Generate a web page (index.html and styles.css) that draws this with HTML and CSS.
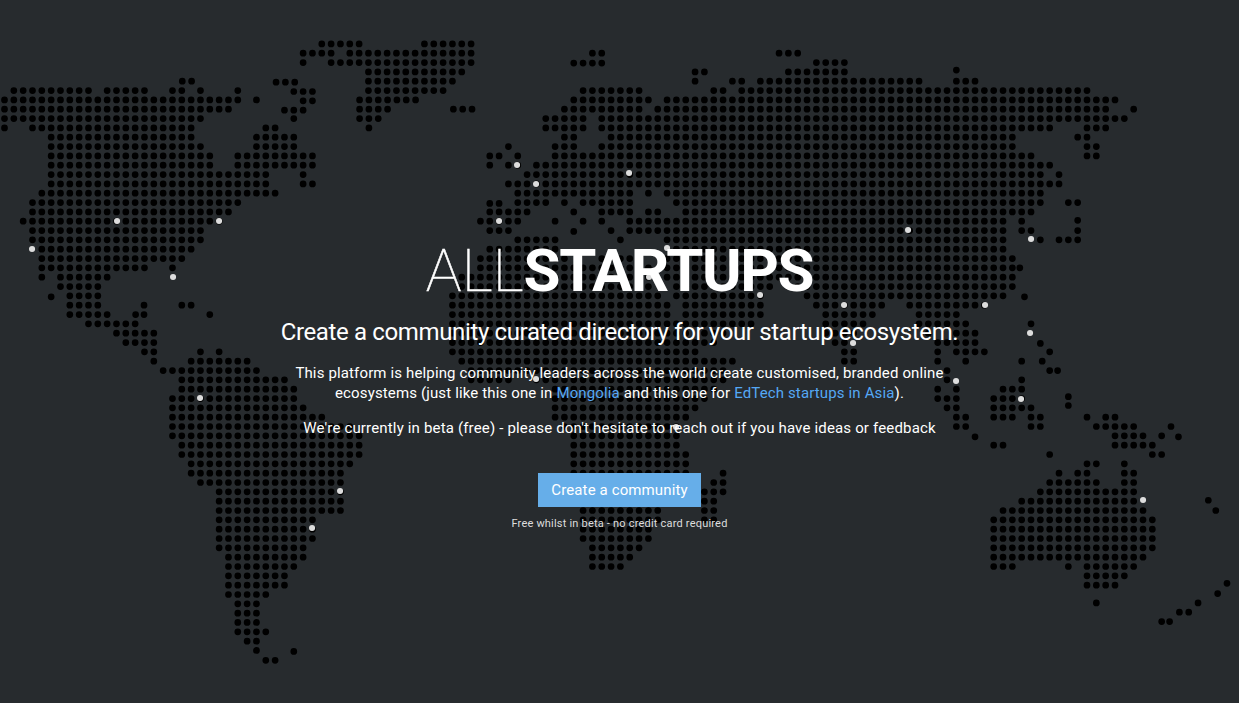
FILE: index.html
```
<!DOCTYPE html>
<html lang="en">
<head>
<meta charset="utf-8">
<title>AllStartups</title>
<link rel="stylesheet" href="styles.css">
</head>
<body>
<main class="hero">
<svg class="map" width="1239" height="703" viewBox="0 0 1239 703" aria-hidden="true">
<!-- One unit is one grid cell; each run is drawn as a row of round dots. -->
<g transform="translate(4.5 43.9) scale(9.332)">
<!-- North and South America -->
<path class="land" d="M19.05 4h1.1M29.1 4.1h2.1M1 5h8.1M11 5h4.1M18 5h1.1M21 5h.1M25 5h.1M31 5.1h2.1M0 6h25.1M27 6h.1M32 6.1h1.1M0 7h24.1M30 7.1h2.1M0 8h21.1M31 8h.1M0 9h.1M3 9h17.1M28 9h1.1M5 10h15.1M27 10h4.1M5 11h16.1M27 11h4.1M5 12h17.1M25 12h8.1M5 13h17.1M25 13h8.1M5 14h23.1M32 14h.1M5 15h23.1M32 15h1.1M4 16h25.1M3 17h22.1M3 18h21.1M2 19h21.1M3 20h18.1M3 21h18.1M4 22h16.1M4 23h15.1M4 24h11.1M18 24h.1M4 25h.1M6 25h5.1M6 26h4.1M5 27.1h.1M7 27h3.1M7 28h3.1M14.95 28h.1M19 28h1.1M7 29h4.1M14.05 29h.1M14.95 29h.1M22 29h.1M9 30h5.1M12 31h4.1M13 32h3.1M15 33h1.1M21 33h.1M23 33h.1M16 34h.1M20 34h6.1M17 35h10.1M19 36h11.1M19 37h12.1M18 38h13.1M18 39h14.1M18 40h16.1M18 41h19.1M18 42h20.1M19 43h19.1M19 44h19.1M20 45h17.1M20 46h16.1M21 47h15.1M23 48h13.1M23 49h13.1M23 50h13.1M23 51h10.1M23 52h10.1M23 53h10.1M23 54h9.1M24 55h8.1M24 56h7.1M24 57h6.1M24 58h6.1M24 59h4.1M25 60h2.1M25 61h2.1M25 62h2.1M25 63h3.1M26 64h1.1M27 65h.1M31 65.1h.1M28 66.05h1.1"/>
<!-- Greenland, Iceland and the Arctic islands -->
<path class="land" d="M34 0h4.1M45 0h5.1M32 1h3.1M37 1h13.1M32 2h.1M35 2h15.1M39 3h10.1M39 4h9.1M39 5h8.1M38.05 6h6.1M38.05 7h3.1M48.1 7h2.1M38.05 8h2.1M39.05 9h.1M63 1h1.1M61 2.05h3.1M74 3h1.1M74 4h.1M83 1h2.1M87 2h3.1M84 3h6.1M102 2.8h.1"/>
<!-- Europe and Asia -->
<path class="land" d="M78 4h1.1M81 4h17.1M102 4h2.1M62 5h6.1M76 5h1.1M79 5h37.1M61 6h8.1M71 6h48.1M60 7h8.1M70 7h48.1M121 7h.1M58 8h4.1M64 8h56.1M58 9h4.1M64 9h48.1M116 9h2.1M60 10h1.1M65 10h43.1M115 10h1.1M54 11h.1M59 11h2.1M64 11h44.1M116 11h1.1M52 12h1.1M55 12h.1M59 12h51.1M116 12h1.1M52 13h.1M54 13h1.1M57 13h55.1M56 14h55.1M113 14h.1M54 15h59.1M55 16h12.1M69 16h.1M71 16h40.1M52 17.1h1.1M55 17h3.1M60 17h.1M62 17h5.1M72 17h39.1M114 17h1.1M52 18h4.1M61 18h.1M64 18h3.1M69 18h1.1M73 18h37.1M51 19h4.1M59 19h.1M62 19h.1M64 19h.1M67 19h40.1M109 19h.1M115 18.9h.1M52 20h2.1M61 20.1h.1M65 20h.1M67 20h40.1M109 20h1.1M115 20h.1M66 21h.1M71 21h36.1M111 21h.1M113 21h2.1M72 22h35.1M71 23h37.1M71 24h37.1M108.8 24h.1M71 25h37.1M72 26h10.1M84 26h24.1M72 27h9.1M86 27h21.1M109.3 27.1h.1M73 28h8.1M87 28h7.1M97 28h8.1M73 29h8.1M88 29h5.1M98 29h4.1M73 30h7.1M88 30h4.1M98 30h5.1M110 30h.1M75 31h2.1M88 31h3.1M99 31h.1M102 31h2.1M89 32h1.1M100 32h4.1M111 32.1h.1M90 33h1.1M100 33h.1M102 33h3.1M112 33h.1M90 34h1.1M100 34h.1M103 34h.1M109 34h.1M111.2 34h.1M101 35h.1M112 35h.1M112.85 35h.1"/>
<!-- Africa -->
<path class="land" d="M55 21h4.1M52 22h7.1M51 23h9.1M64 23h4.1M51 24h18.1M49 25h20.1M49 26h20.1M48 27h22.1M48 28h23.1M48 29h23.1M48 30h24.1M48 31h25.1M48 32h28.1M48 33h26.1M49 34h29.1M50 35h27.1M50 36h4.1M57 36h20.1M59 37h17.1M59 38h16.1M59 39h15.1M59 40h14.1M60 41h12.1M61 42h11.1M61 43h11.1M61 44h12.1M61 45h12.1M61 46h12.1M77 46h.1M61 47h11.1M76 47h1.1M61 48h11.1M75 48h2.1M62 49h9.1M75 49h1.1M62 50h8.1M75 50h1.1M62 51h8.1M75 51h1.1M62 52h7.1M62 53h7.1M63 54h5.1M63 55h4.1M63 56h3.1"/>
<!-- South-East Asia and Oceania -->
<path class="land" d="M101 36h.1M109 36h.1M100 37h.1M102 37h.1M107 37h2.1M100 38h2.1M106 38h3.1M114 37.8h.1M101 39h1.1M106 39h4.1M114 38.75h.1M102 40h1.1M106 40h2.1M110 40h1.1M116 40h.1M118 40h1.1M102 41h1.1M110 41h1.1M117 41h4.1M125 41h.1M104 42.1h.1M119 42h3.1M124 42h.1M125.8 42.1h.1M106 43h1.1M119 43h4.1M112 44h.1M123 44h1.1M116 45h1.1M120 45h.1M113 46h.1M115 46h1.1M120 46h1.1M112 47h5.1M120 47h1.1M111 48h10.1M109 49h12.1M107 50h15.1M106 51h17.1M106 52h17.1M106 53h17.1M106 54h17.1M106 55h16.1M106 56h2.1M114 56h.1M116 56h5.1M116 57h4.1M116 58h3.1M117 59.9h.1M129 48.9h.1M129.8 50h.1M131 57.8h.1M130 58.9h.1M127.9 59.9h.1M125.9 60.9h1.1M124 61.9h.1M124.85 61.9h.1"/>
</g>
<!-- Active communities -->
<path class="cities" d="M117 221h.1M219 221h.1M32 249h.1M173 277h.1M200 398h.1M340 491h.1M312 528h.1M517 165h.1M536 184h.1M499 221h.1M629 173h.1M908 230h.1M1031 239h.1M667 248h.1M649 277h.1M760 295h.1M844 305h.1M985 305h.1M853 343h.1M1030 333h.1M956 381h.1M1021 399h.1M536 379h.1M676 427h.1M1143 500h.1"/>
</svg>
<div class="content">
<h1 class="logo">ALL<b>STARTUPS</b></h1>
<h2 class="tagline">Create a community curated directory for your startup ecosystem.</h2>
<p class="text">This platform is helping community leaders across the world create customised, branded online<br>ecosystems (just like this one in <a class="link" href="#">Mongolia</a> and this one for <a class="link" href="#">EdTech startups in Asia</a>).</p>
<p class="text text-beta">We're currently in beta (free) - please don't hesitate to reach out if you have ideas or feedback</p>
<a class="button" href="#">Create a community</a>
<p class="note">Free whilst in beta - no credit card required</p>
</div>
</main>
</body>
</html>
```
FILE: styles.css
```
body {
  margin: 0;
  background: #272b2e;
  color: #fff;
  font-family: Roboto, sans-serif;
}

.hero {
  position: relative;
  height: 703px;
  overflow: hidden;
}

.map {
  position: absolute;
  top: 0;
  left: 0;
}

.land {
  fill: none;
  stroke: #000;
  stroke-width: 0.72;
  stroke-linecap: round;
  stroke-dasharray: 0 1;
}

.cities {
  fill: none;
  stroke: #ddd;
  stroke-width: 6;
  stroke-linecap: round;
}

.content {
  position: relative;
  display: flex;
  flex-direction: column;
  align-items: center;
  padding-top: 238px;
  text-align: center;
  white-space: nowrap;
}

.logo {
  margin: 0;
  font-size: 60px;
  font-weight: 100;
  line-height: 66px;
  -webkit-text-stroke: 0.5px #fff;
}

.logo b {
  font-weight: 700;
  letter-spacing: -1.35px;
  -webkit-text-stroke: 0;
}

.tagline {
  margin: 15px 0 18px;
  font-size: 24px;
  font-weight: 400;
  line-height: 26px;
  letter-spacing: -0.36px;
}

.text {
  margin: 0 0 15px;
  font-size: 15px;
  line-height: 20px;
  letter-spacing: 0.14px;
}

.text-beta {
  letter-spacing: 0.165px;
}

.link {
  color: #55a8f5;
  text-decoration: none;
}

.button {
  width: 163px;
  margin-top: 20px;
  background: #66aee9;
  color: #fff;
  font-size: 15px;
  line-height: 34px;
  letter-spacing: 0.12px;
  text-decoration: none;
}

.note {
  margin: 9px 0 0;
  color: #ddd;
  font-size: 11px;
  line-height: 15px;
  letter-spacing: 0.2px;
}
```
